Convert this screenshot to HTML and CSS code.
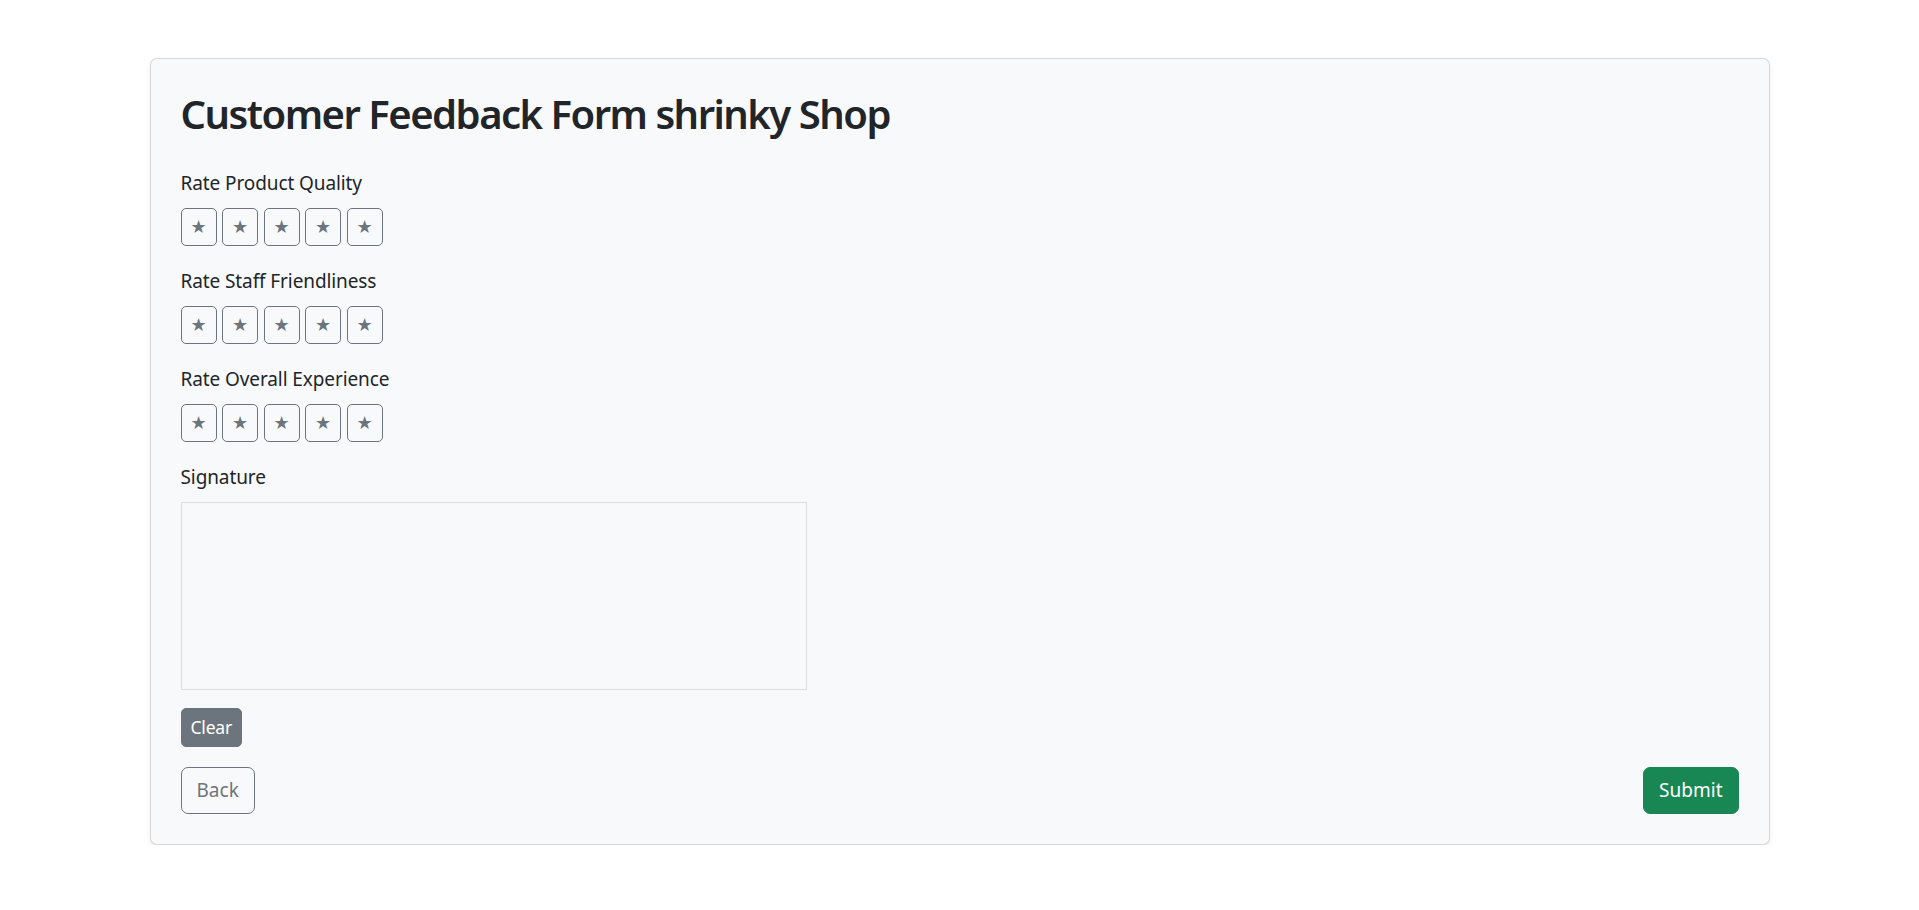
FILE: index.html
```html
<!DOCTYPE html>
<html lang="en">
<head>
<meta charset="utf-8">
<title>Customer Feedback Form shrinky Shop</title>
<link rel="stylesheet" href="styles.css">
</head>
<body>
<div class="container">
  <div class="card">
    <h2 class="title">Customer Feedback Form shrinky Shop</h2>

    <div class="group">
      <label class="label">Rate Product Quality</label>
      <div class="stars">
        <button class="star" type="button">★</button>
        <button class="star" type="button">★</button>
        <button class="star" type="button">★</button>
        <button class="star" type="button">★</button>
        <button class="star" type="button">★</button>
      </div>
    </div>

    <div class="group">
      <label class="label">Rate Staff Friendliness</label>
      <div class="stars">
        <button class="star" type="button">★</button>
        <button class="star" type="button">★</button>
        <button class="star" type="button">★</button>
        <button class="star" type="button">★</button>
        <button class="star" type="button">★</button>
      </div>
    </div>

    <div class="group">
      <label class="label">Rate Overall Experience</label>
      <div class="stars">
        <button class="star" type="button">★</button>
        <button class="star" type="button">★</button>
        <button class="star" type="button">★</button>
        <button class="star" type="button">★</button>
        <button class="star" type="button">★</button>
      </div>
    </div>

    <div class="group">
      <label class="label">Signature</label>
      <canvas class="signature" width="624" height="186"></canvas>
      <button class="btn-clear" type="button">Clear</button>
    </div>

    <div class="actions">
      <button class="btn-back" type="button">Back</button>
      <button class="btn-submit" type="button">Submit</button>
    </div>
  </div>
</div>
</body>
</html>
```

FILE: styles.css
```css
* {
  box-sizing: border-box;
}

html, body {
  margin: 0;
  padding: 0;
  background: #ffffff;
}

body {
  font-family: "Noto Sans", "Open Sans", "DejaVu Sans", sans-serif;
  color: #212529;
  font-size: 20px;
  line-height: 1.5;
}

.container {
  max-width: 1620px;
  margin: 58px auto 0;
}

.card {
  background: #f8f9fa;
  border: 1px solid rgba(0, 0, 0, 0.13);
  border-radius: 7px;
  box-shadow: 0 2.5px 5px rgba(0, 0, 0, 0.075);
  padding: 31px 30px 30px;
}

.title {
  margin: 0 0 30px;
  font-size: 40px;
  font-weight: 600;
  line-height: 48px;
  letter-spacing: -1.5px;
}

.group {
  margin-bottom: 20px;
}

.label {
  display: block;
  font-size: 19px;
  line-height: 30px;
  margin-bottom: 10px;
  letter-spacing: -0.1px;
}

.stars {
  display: flex;
  gap: 5.5px;
}

.star {
  width: 36px;
  height: 38px;
  padding: 0;
  display: flex;
  align-items: center;
  justify-content: center;
  border: 1px solid #6c757d;
  border-radius: 5px;
  background: transparent;
  color: #6c757d;
  font-family: "DejaVu Sans", sans-serif;
  font-size: 18px;
  line-height: 1;
}

.signature {
  display: block;
  border: 1px solid #dcdee0;
  margin-bottom: 18px;
}

.btn-clear {
  display: block;
  height: 39px;
  padding: 0 9px;
  border: 1px solid #6c757d;
  border-radius: 5px;
  background: #6c757d;
  color: #ffffff;
  font-family: inherit;
  font-size: 17.5px;
  line-height: 1;
  letter-spacing: -0.2px;
}

.actions {
  display: flex;
  justify-content: space-between;
  align-items: center;
}

.btn-back,
.btn-submit {
  height: 47px;
  padding: 0 15px;
  border-radius: 7px;
  font-family: inherit;
  font-size: 19px;
  line-height: 1;
}

.btn-back {
  background: transparent;
  border: 1px solid #6c757d;
  color: #6c757d;
}

.btn-submit {
  background: #198754;
  border: 1px solid #198754;
  color: #ffffff;
}
```
